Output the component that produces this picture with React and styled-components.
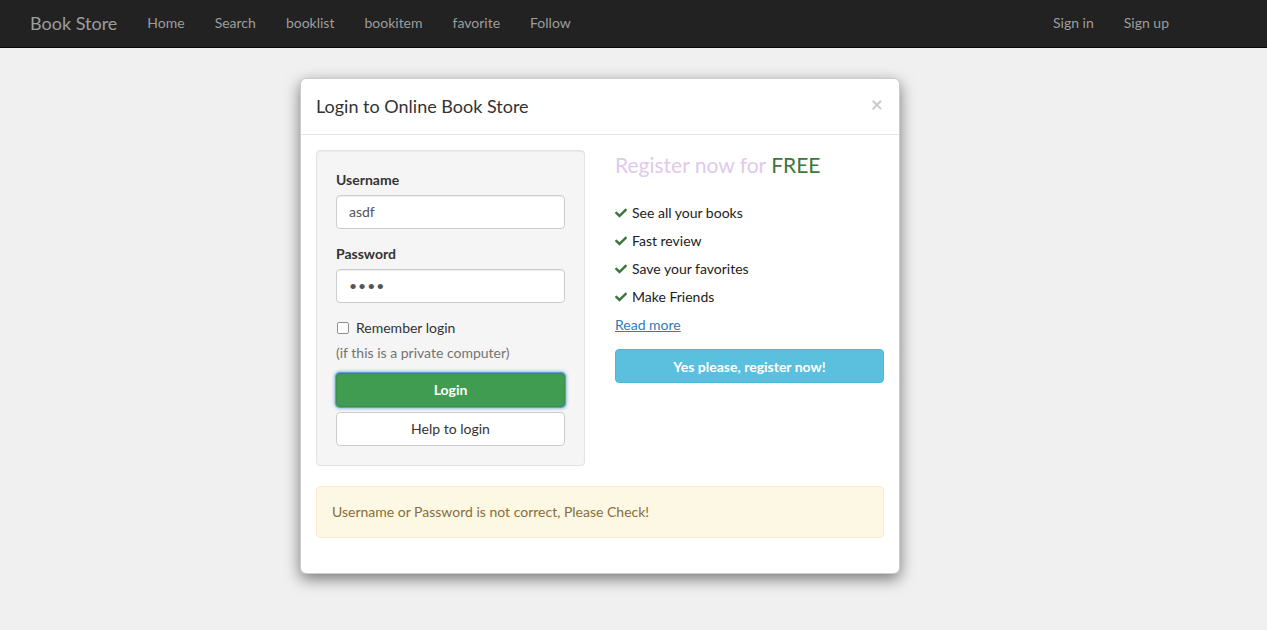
import styled, { createGlobalStyle } from "styled-components";
import { FaCheck } from "react-icons/fa";

const GlobalStyle = createGlobalStyle`
    * { box-sizing: border-box; }
    body {
        margin: 0;
        background: #f0f0f0;
        font-family: Lato, "Open Sans", sans-serif;
        font-size: 14px;
        line-height: 1.42857;
        color: #333;
    }
`;

const Navbar = styled.nav`
    height: 48px;
    background: #222;
    border-bottom: 1px solid #080808;
    display: flex;
    align-items: flex-start;
    justify-content: space-between;
    padding: 0 83px 0 15px;
`;

const NavGroup = styled.div`
    display: flex;
    align-items: center;
`;

const Brand = styled.a`
    font-size: 18px;
    color: #9d9d9d;
    padding: 0 15px;
    line-height: 46px;
    text-decoration: none;
`;

const NavLink = styled.a`
    color: #9d9d9d;
    padding: 0 15px;
    line-height: 46px;
    text-decoration: none;
`;

const Modal = styled.div`
    width: 600px;
    margin: 30px 0 30px 300px;
    background: #fff;
    border: 1px solid rgba(0, 0, 0, 0.2);
    border-radius: 6px;
    box-shadow: 0 5px 15px rgba(0, 0, 0, 0.5);
`;

const ModalHeader = styled.div`
    display: flex;
    justify-content: space-between;
    align-items: center;
    padding: 14px 15px 15px;
    border-bottom: 1px solid #e5e5e5;
`;

const ModalTitle = styled.h4`
    margin: 0;
    font-size: 18px;
    font-weight: 400;
    line-height: 26px;
`;

const Close = styled.span`
    font-size: 21px;
    font-weight: 700;
    line-height: 1;
    color: #000;
    opacity: 0.2;
    margin-top: -6px;
    margin-right: 1px;
`;

const ModalBody = styled.div`
    padding: 15px;
`;

const Row = styled.div`
    display: grid;
    grid-template-columns: 269px 269px;
    column-gap: 30px;
`;

const Well = styled.div`
    background: #f5f5f5;
    border: 1px solid #e3e3e3;
    border-radius: 4px;
    padding: 19px;
    margin-bottom: 20px;
    box-shadow: inset 0 1px 1px rgba(0, 0, 0, 0.05);
`;

const FormGroup = styled.div`
    margin-bottom: 15px;
`;

const Label = styled.label`
    display: block;
    font-weight: 700;
    margin-bottom: 5px;
`;

const Input = styled.div`
    height: 34px;
    padding: 6px 12px;
    background: #fff;
    border: 1px solid #ccc;
    border-radius: 4px;
    color: #555;
    box-shadow: inset 0 1px 1px rgba(0, 0, 0, 0.075);
    letter-spacing: ${({ $dots }) => ($dots ? "1px" : "0")};
`;

const CheckLine = styled.label`
    display: flex;
    align-items: center;
    gap: 7px;
    line-height: 20px;
    margin-bottom: 5px;
`;

const Box = styled.span`
    width: 12px;
    height: 12px;
    border: 1px solid #8f8f8f;
    border-radius: 2px;
    background: #fff;
    margin-left: 1px;
`;

const HelpText = styled.p`
    margin: 0 0 10px;
    color: #737373;
`;

const Button = styled.button`
    display: block;
    width: 100%;
    height: 34px;
    font-family: inherit;
    font-size: 14px;
    border-radius: 4px;
    border: 1px solid ${({ $border }) => $border};
    background: ${({ $bg }) => $bg};
    color: ${({ $color }) => $color};
    font-weight: ${({ $bold }) => ($bold ? 700 : 400)};
    box-shadow: ${({ $focus }) =>
        $focus ? "0 0 0 1px #5b9dd9, 0 0 3px 2px rgba(91, 157, 217, 0.6)" : "none"};
    margin-bottom: ${({ $gap }) => $gap || 0}px;
`;

const Lead = styled.p`
    font-size: 21px;
    line-height: 1.4;
    margin: 0 0 20px;
    color: #e0c9ec;
`;

const Free = styled.span`
    color: #3c763d;
`;

const List = styled.ul`
    list-style: none;
    margin: 0;
    padding: 0;
`;

const Item = styled.li`
    display: flex;
    align-items: center;
    gap: 5px;
    line-height: 28px;
    color: #222;

    svg {
        color: #3c763d;
        font-size: 12px;
    }
`;

const ReadMore = styled.a`
    display: block;
    line-height: 28px;
    color: #337ab7;
    text-decoration: underline;
    margin-bottom: 10px;
`;

const Alert = styled.div`
    padding: 15px;
    background: #fcf8e3;
    border: 1px solid #faebcc;
    border-radius: 4px;
    color: #8a6d3b;
    margin-bottom: 20px;
`;

const perks = ["See all your books", "Fast review", "Save your favorites", "Make Friends"];

const App = () => {
    return (
        <>
            <GlobalStyle />
            <Navbar>
                <NavGroup>
                    <Brand>Book Store</Brand>
                    <NavLink>Home</NavLink>
                    <NavLink>Search</NavLink>
                    <NavLink>booklist</NavLink>
                    <NavLink>bookitem</NavLink>
                    <NavLink>favorite</NavLink>
                    <NavLink>Follow</NavLink>
                </NavGroup>
                <NavGroup>
                    <NavLink>Sign in</NavLink>
                    <NavLink>Sign up</NavLink>
                </NavGroup>
            </Navbar>
            <Modal>
                <ModalHeader>
                    <ModalTitle>Login to Online Book Store</ModalTitle>
                    <Close>×</Close>
                </ModalHeader>
                <ModalBody>
                    <Row>
                        <Well>
                            <FormGroup>
                                <Label>Username</Label>
                                <Input>asdf</Input>
                            </FormGroup>
                            <FormGroup>
                                <Label>Password</Label>
                                <Input $dots>••••</Input>
                            </FormGroup>
                            <CheckLine>
                                <Box />
                                Remember login
                            </CheckLine>
                            <HelpText>(if this is a private computer)</HelpText>
                            <Button $bg="#3f9c51" $border="#3a8f4a" $color="#fff" $bold $focus $gap={5}>
                                Login
                            </Button>
                            <Button $bg="#fff" $border="#ccc" $color="#333">
                                Help to login
                            </Button>
                        </Well>
                        <div>
                            <Lead>
                                Register now for <Free>FREE</Free>
                            </Lead>
                            <List>
                                {perks.map((p) => (
                                    <Item key={p}>
                                        <FaCheck />
                                        {p}
                                    </Item>
                                ))}
                            </List>
                            <ReadMore>Read more</ReadMore>
                            <Button $bg="#5bc0de" $border="#46b8da" $color="#fff" $bold>
                                Yes please, register now!
                            </Button>
                        </div>
                    </Row>
                    <Alert>Username or Password is not correct, Please Check!</Alert>
                </ModalBody>
            </Modal>
        </>
    );
};

export default App;
